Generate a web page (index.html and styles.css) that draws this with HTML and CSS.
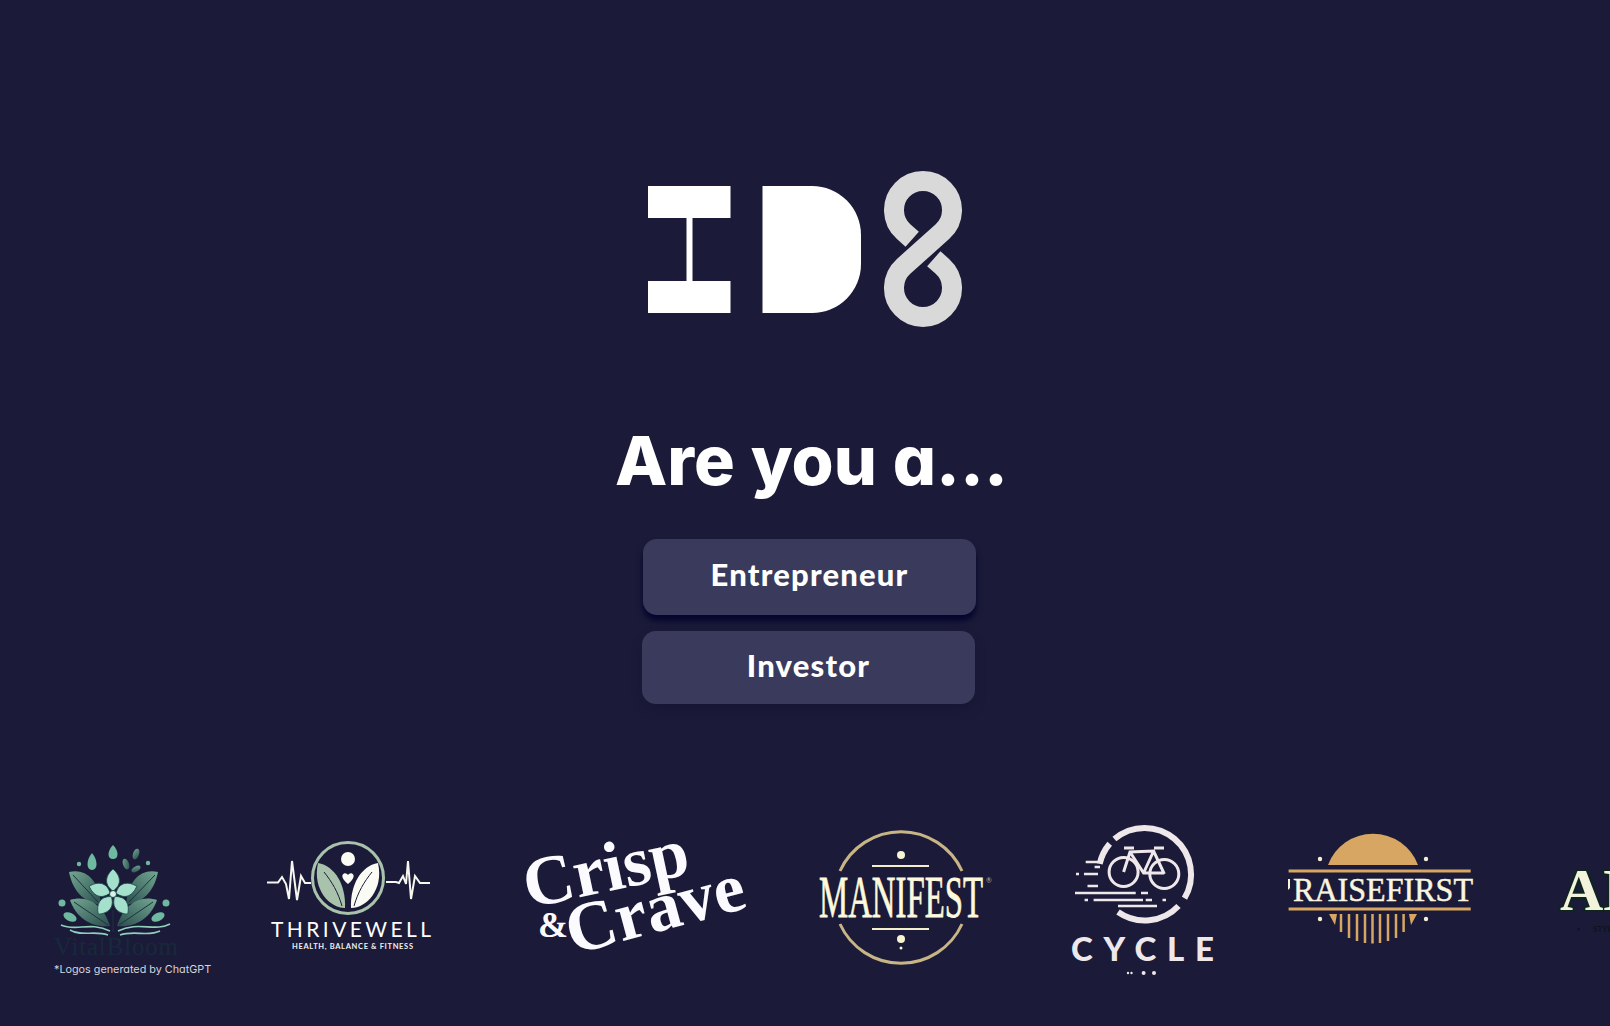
FILE: index.html
```html
<!DOCTYPE html>
<html lang="en">
<head>
<meta charset="utf-8">
<title>ID8</title>
<link rel="stylesheet" href="styles.css">
</head>
<body>
<main class="page">
  <section class="hero">
    <svg class="brand" viewBox="647.5 171 315 156" role="img" aria-label="ID8">
      <path class="brand-white" d="M647.5 186H730V218H692V281H730V313H647.5V281H686V218H647.5Z"/>
      <path class="brand-white" d="M762 186H811.5A49 49 0 0 1 860.5 235V264A49 49 0 0 1 811.5 313H762Z"/>
      <path class="brand-eight" d="M911.7 239.3L903.1 231.6A29 29 0 1 1 941.9 231.6L903.1 266.4A29 29 0 1 0 941.9 266.4L933.3 258.7"/>
    </svg>
    <h1 class="title">Are you a...</h1>
    <div class="choices">
      <button class="choice choice-hover" type="button">Entrepreneur</button>
      <button class="choice" type="button">Investor</button>
    </div>
  </section>

  <section class="strip">
    <figure class="logo logo-first">
      <svg class="art a1" viewBox="50 822 190 140">
        <defs>
          <linearGradient id="leafL" x1="0" y1="0" x2="1" y2="1"><stop offset="0" stop-color="#73a892"/><stop offset="1" stop-color="#2a4d4d"/></linearGradient>
          <linearGradient id="leafR" x1="1" y1="0" x2="0" y2="1"><stop offset="0" stop-color="#73a892"/><stop offset="1" stop-color="#2a4d4d"/></linearGradient>
        </defs>
        <path class="leaf-l" d="M69 872C84 868 99 878 101 905C86 903 73 893 69 872Z"/>
        <path class="leaf-r" d="M158 872C143 868 128 878 126 905C141 903 154 893 158 872Z"/>
        <path class="leaf-l" d="M70 900C88 894 104 906 110 926C92 928 76 918 70 900Z"/>
        <path class="leaf-r" d="M157 900C139 894 123 906 117 926C135 928 151 918 157 900Z"/>
        <path class="vein" d="M73 875L98 902M74 902L108 925M155 875L129 902M153 902L119 925M113 910V932"/>
        <ellipse class="teal" cx="70" cy="917" rx="7" ry="4" transform="rotate(25 70 917)"/>
        <ellipse class="teal" cx="158" cy="917" rx="7" ry="4" transform="rotate(-25 158 917)"/>
        <circle class="teal" cx="62" cy="903" r="3.5"/><circle class="teal" cx="166" cy="903" r="3.5"/>
        <circle class="teal" cx="79" cy="864" r="2.2"/><circle class="teal" cx="148" cy="863" r="2.2"/>
        <path class="teal" d="M92 853C86 860 86 870 92 870C98 870 98 860 92 853Z"/>
        <path class="teal" d="M113 845C107 851 107 859 113 859C119 859 119 851 113 845Z"/>
        <ellipse class="leaf-l" cx="136" cy="854" rx="3" ry="5.500" transform="rotate(20 136 854)"/>
        <ellipse class="leaf-l" cx="126" cy="864" rx="3" ry="5.500" transform="rotate(-20 126 864)"/>
        <ellipse class="leaf-l" cx="136" cy="869" rx="2.500" ry="5" transform="rotate(60 136 869)"/>
        <g transform="translate(113 894)">
          <path class="petal" d="M0 -3C-10 -10 -7 -19 0 -25C7 -19 10 -10 0 -3Z"/>
          <path class="petal" transform="rotate(72)" d="M0 -3C-10 -10 -7 -19 0 -25C7 -19 10 -10 0 -3Z"/>
          <path class="petal" transform="rotate(144)" d="M0 -3C-10 -10 -7 -19 0 -25C7 -19 10 -10 0 -3Z"/>
          <path class="petal" transform="rotate(216)" d="M0 -3C-10 -10 -7 -19 0 -25C7 -19 10 -10 0 -3Z"/>
          <path class="petal" transform="rotate(288)" d="M0 -3C-10 -10 -7 -19 0 -25C7 -19 10 -10 0 -3Z"/>
          <circle class="petal-core" r="3.5"/>
        </g>
        <path class="wave" d="M61 925C76 932 90 921 110 931"/>
        <path class="wave" d="M70 930C82 937 94 930 108 935"/>
        <path class="wave" d="M170 924C155 932 138 921 118 931"/>
        <path class="wave" d="M160 931C148 937 134 930 120 935"/>
        <text class="bloom" x="54" y="955" textLength="124">VitalBloom</text>
      </svg>
      <figcaption class="note">*Logos generated by ChatGPT</figcaption>
    </figure>

    <figure class="logo">
      <svg class="art a2" viewBox="260 822 240 160">
        <path class="ecg" d="M267 882.500H278L282 877L286 884L289 899L292 861L297 900L301 876L305 883H311"/>
        <path class="ecg" d="M386 882H396L399 883L403 876L406 884L408 861L411 899L415 876L420 883H430"/>
        <circle class="ring-green" cx="348" cy="878" r="35.500"/>
        <circle class="white" cx="348" cy="859" r="7"/>
        <path class="white" d="M348 884C342 879 341 875 344 873.500C346 873 347 874 348 875C349 874 350 873 352 873.500C355 875 354 879 348 884Z"/>
        <path class="sage" d="M318 863C335 866 346 885 345 908C330 908 312 890 318 863Z"/>
        <path class="white" d="M378 863C361 866 350 885 351 908C366 908 384 890 378 863Z"/>
        <path class="thrive-vein" d="M324 872C332 882 338 892 342 906M372 872C364 882 358 892 354 906"/>
        <text class="thrive" x="271" y="937" textLength="160">THRIVEWELL</text>
        <text class="thrive-sub" x="292" y="949" textLength="121">HEALTH, BALANCE &amp; FITNESS</text>
      </svg>
    </figure>

    <figure class="logo">
      <svg class="art a3" viewBox="520 822 270 160">
        <g class="crisp">
          <text transform="translate(553 903) rotate(-12)" x="-25">Crisp</text>
          <text transform="translate(590 950) rotate(-15)" x="-18">Crave</text>
          <text class="amp" x="538" y="937">&amp;</text>
        </g>
      </svg>
    </figure>

    <figure class="logo">
      <svg class="art a4" viewBox="810 822 230 160">
        <path class="man-ring" d="M840 871A67 67 0 0 1 962 871"/>
        <path class="man-ring" d="M840 924A67 67 0 0 0 962 924"/>
        <path class="man-line" d="M872 866H929M872 929H929"/>
        <circle class="cream" cx="901" cy="855" r="4"/>
        <circle class="cream" cx="901" cy="939" r="4"/>
        <circle class="cream" cx="901" cy="948" r="1.500"/>
        <text class="manifest" x="819" y="917" textLength="164" lengthAdjust="spacingAndGlyphs">MANIFEST</text>
        <text class="reg" x="986" y="883">®</text>
      </svg>
    </figure>

    <figure class="logo">
      <svg class="art a5" viewBox="1060 822 205 160">
        <path class="cy-ring" d="M1114.400 839A46.500 46.500 0 0 1 1184.500 898.200"/>
        <path class="cy-ring" d="M1178.500 906A46.500 46.500 0 0 1 1118 912"/>
        <path class="cy-ring" d="M1109.700 843.800A46.500 46.500 0 0 0 1099.700 863.800"/>
        <g class="bike">
          <circle cx="1123.600" cy="872" r="14.500"/>
          <circle cx="1164.300" cy="874" r="14.500"/>
          <path d="M1123.600 872L1130 852L1153.600 851L1164.300 874M1130 852L1143.600 873H1164.300M1153.600 851L1143.600 873M1124 848H1134M1154 848H1164"/>
        </g>
        <path class="cy-lines" d="M1085.700 862H1098M1094.600 867H1100M1076 874H1079M1084 874H1098M1087.500 886H1098M1075 893H1135.700M1141 893H1148M1084.600 900H1088M1093.600 900H1143M1145.700 900H1152M1162.500 900H1166M1118 906H1157"/>
        <text class="cycle" x="1071" y="961" textLength="143">CYCLE</text>
        <circle class="cy-dot" cx="1128" cy="973" r="1.200"/>
        <circle class="cy-dot" cx="1131.500" cy="973" r="1.200"/>
        <circle class="cy-dot" cx="1143.600" cy="973" r="2"/>
        <circle class="cy-dot" cx="1154" cy="973" r="2"/>
      </svg>
    </figure>

    <figure class="logo">
      <svg class="art a6" viewBox="1285 822 240 160">
        <path class="sun" d="M1328 865A48 48 0 0 1 1418 865Z"/>
        <path class="sun-line" d="M1288.600 871H1470.700M1288.600 909H1470.700"/>
        <path class="sun-stub" d="M1288 879H1290V888L1288 890Z"/>
        <text class="raise" x="1293" y="901" textLength="180" lengthAdjust="spacingAndGlyphs">RAISEFIRST</text>
        <path class="sun-bars" d="M1341 914V932M1349 914V938M1357 914V941M1365 914V943M1372.500 914V943.500M1380 914V943M1388 914V941M1396 914V938M1403.600 914V932"/>
        <path class="sun" d="M1329 914H1337L1335 925ZM1417 914H1409L1411 925Z"/>
        <circle class="cream2" cx="1320" cy="859" r="2.200"/><circle class="cream2" cx="1426" cy="859" r="2.200"/>
        <circle class="cream2" cx="1320" cy="919" r="2.200"/><circle class="cream2" cx="1426" cy="919" r="2.200"/>
      </svg>
    </figure>

    <figure class="logo">
      <svg class="art a7" viewBox="1545 822 200 160">
        <text class="alder" x="1560" y="910">AL</text>
        <circle class="alder-dot" cx="1578.600" cy="929" r="1.200"/>
        <text class="alder-sub" x="1593" y="932">STYLE</text>
      </svg>
    </figure>
  </section>
</main>
</body>
</html>
```

FILE: styles.css
```css
* { box-sizing: border-box; }

html, body {
  margin: 0;
  height: 100%;
  overflow: hidden;
  background: #1b1b39;
}

.page {
  width: 100%;
  height: 1026px;
  display: flex;
  flex-direction: column;
  color: #fff;
  font-family: Lato, "Noto Sans", sans-serif;
}

.hero {
  display: flex;
  flex-direction: column;
  align-items: center;
  padding-top: 171px;
  height: 822px;
  flex: none;
}

.brand {
  width: 315px;
  height: 156px;
  display: block;
}

.brand-white { fill: #fff; }

.brand-eight {
  fill: none;
  stroke: #d9d9d9;
  stroke-width: 20;
}

.title {
  margin: 93px 0 0 13px;
  font-family: Inter, Lato, sans-serif;
  font-feature-settings: "cv11" 1;
  font-size: 68px;
  line-height: 80px;
  font-weight: 800;
  letter-spacing: 0;
  word-spacing: 1px;
}

.choices {
  margin: 39px 0 0 7px;
  display: flex;
  flex-direction: column;
  align-items: center;
  gap: 16px;
}

.choice {
  width: 333px;
  height: 73px;
  padding: 0 0 6px;
  border: 0;
  border-radius: 14px;
  background: #3a3a5c;
  color: #fff;
  font-family: Lato, sans-serif;
  font-size: 31px;
  font-weight: 900;
  letter-spacing: 1.200px;
  box-shadow: 0 6px 10px rgba(20, 20, 50, 0.5);
}

.choice-hover {
  height: 76px;
  transform: translateX(1px);
  box-shadow: 0 6px 6px #04042e;
}

.strip {
  display: flex;
  gap: 20px;
  padding-left: 50px;
  align-items: flex-start;
  overflow: hidden;
  flex: none;
  width: 100%;
}

.logo {
  margin: 0;
  flex: none;
  display: flex;
  flex-direction: column;
}

.art { display: block; height: 160px; overflow: visible; }
.a1 { width: 190px; height: 140px; }
.a2 { width: 240px; }
.a3 { width: 270px; }
.a4 { width: 230px; }
.a5 { width: 205px; }
.a6 { width: 240px; }
.a7 { width: 200px; }

.note {
  width: 190px;
  padding-left: 4px;
  font-family: Inter, Lato, sans-serif;
  font-feature-settings: "cv11" 1;
  font-size: 10.800px;
  line-height: 16px;
  color: #d4d4dc;
}

/* VitalBloom */
.leaf-l { fill: url(#leafL); }
.leaf-r { fill: url(#leafR); }
.vein { fill: none; stroke: #1d3340; stroke-width: 1; }
.teal { fill: #6fb9a0; }
.petal { fill: #a4e0cb; stroke: #1f4a4c; stroke-width: 0.800; }
.petal-core { fill: #d6f3e8; stroke: #1f4a4c; }
.wave { fill: none; stroke: #8fd0bb; stroke-width: 1.600; }
.bloom {
  font-family: "Liberation Serif", serif;
  font-size: 25px;
  fill: #17293a;
}

/* Thrivewell */
.ecg { fill: none; stroke: #f7f7f2; stroke-width: 2; }
.ring-green { fill: none; stroke: #a8c2ab; stroke-width: 3; }
.white { fill: #fbfbf5; }
.sage { fill: #a8c2ab; }
.thrive-vein { fill: none; stroke: #1b1b39; stroke-width: 1; }
.thrive {
  font-family: Lato, sans-serif;
  font-size: 21px;
  fill: #fff;
}
.thrive-sub {
  font-family: Lato, sans-serif;
  font-size: 7.500px;
  font-weight: 700;
  fill: #f0f0ee;
}

/* Crisp & Crave */
.crisp text {
  font-family: "Liberation Serif", serif;
  font-size: 70px;
  font-weight: 700;
  fill: #fbfaff;
}
.crisp .amp { font-size: 36px; }

/* Manifest */
.man-ring { fill: none; stroke: #c8b585; stroke-width: 3; }
.man-line { fill: none; stroke: #f4eecb; stroke-width: 2; }
.cream { fill: #f8f3d3; }
.manifest {
  font-family: "Liberation Serif", serif;
  font-size: 59px;
  fill: #fdf9dc;
  stroke: #fdf9dc;
  stroke-width: 0.800px;
}
.reg { font-size: 7px; fill: #b5b09a; font-family: Lato, sans-serif; }

/* Cycle */
.cy-ring { fill: none; stroke: #efe8ea; stroke-width: 6; }
.bike { fill: none; stroke: #efe8ea; stroke-width: 3; }
.cy-lines { fill: none; stroke: #efe8ea; stroke-width: 2.500; }
.cy-dot { fill: #efe8ea; }
.cycle {
  font-family: Lato, sans-serif;
  font-size: 33px;
  font-weight: 900;
  fill: #efe8ea;
}

/* Raisefirst */
.sun { fill: #d6a662; }
.sun-line { fill: none; stroke: #d6a662; stroke-width: 3; }
.sun-bars { fill: none; stroke: #d6a662; stroke-width: 2.500; }
.sun-stub { fill: #f9f5df; }
.cream2 { fill: #f6efd6; }
.raise {
  font-family: "Liberation Serif", serif;
  font-size: 34px;
  fill: #f9f5df;
  stroke: #f9f5df;
  stroke-width: 0.500px;
}

/* Cut-off logo */
.alder {
  font-family: "Liberation Serif", serif;
  font-size: 60px;
  font-weight: 700;
  fill: #f3f2dc;
  stroke: #0d241f;
  stroke-width: 4px;
  paint-order: stroke;
}
.alder-dot { fill: #0d1420; }
.alder-sub {
  font-family: Lato, sans-serif;
  font-size: 8px;
  font-weight: 900;
  fill: #0d1420;
}
```
